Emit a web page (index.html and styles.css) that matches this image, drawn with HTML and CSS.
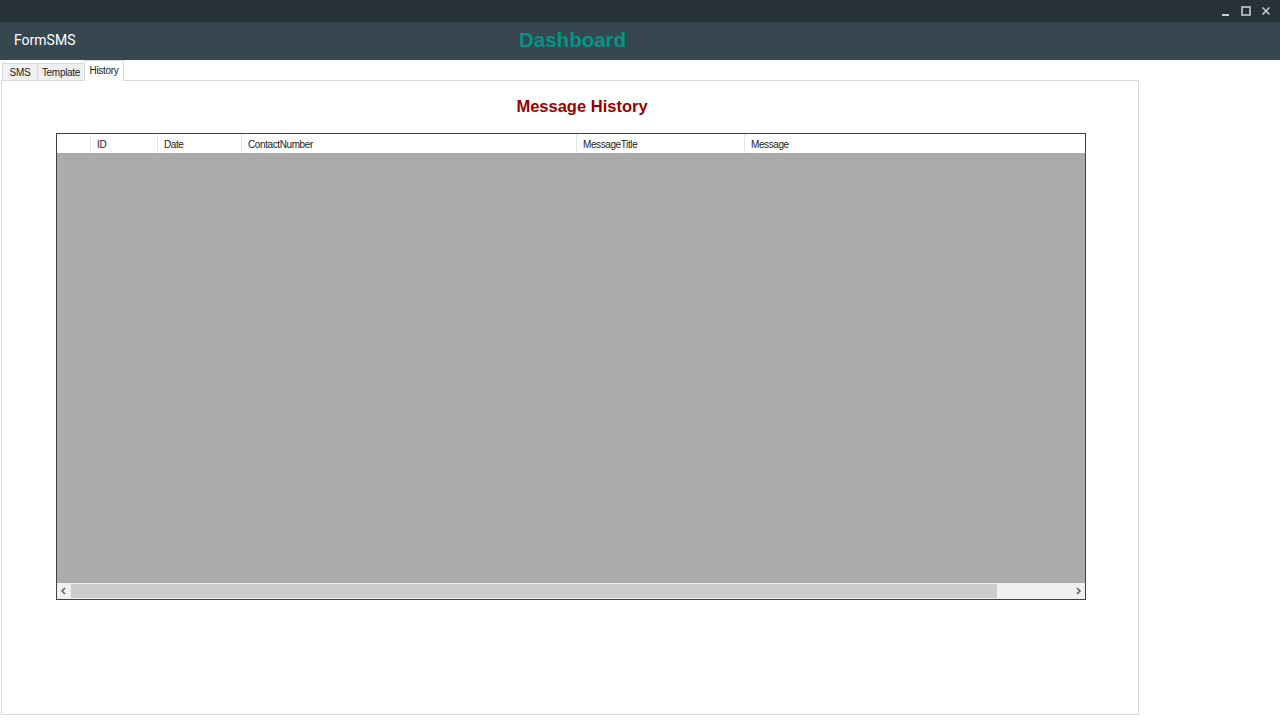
FILE: index.html
```html
<!DOCTYPE html>
<html>
<head>
    <title>FormSMS</title>
    <link rel="stylesheet" href="styles.css">
</head>
<body>
    <div class="titlebar">
        <span class="win-btn">
            <svg width="10" height="10" viewBox="0 0 10 10"><rect x="1" y="8" width="7" height="2" fill="#c8ccce"/></svg>
        </span>
        <span class="win-btn">
            <svg width="10" height="10" viewBox="0 0 10 10"><rect x="1" y="1" width="8" height="8" fill="none" stroke="#c8ccce" stroke-width="1.6"/></svg>
        </span>
        <span class="win-btn">
            <svg width="10" height="10" viewBox="0 0 10 10"><path d="M1.5 1.5 L8.5 8.5 M8.5 1.5 L1.5 8.5" stroke="#c8ccce" stroke-width="1.6"/></svg>
        </span>
    </div>

    <div class="header">
        <div class="app-name">FormSMS</div>
        <div class="page-title">Dashboard</div>
    </div>

    <div class="tabs">
        <div class="tab tab-sms">SMS</div>
        <div class="tab tab-template">Template</div>
        <div class="tab tab-history active">History</div>
    </div>

    <div class="panel">
        <h1>Message History</h1>

        <div class="grid">
            <div class="grid-head">
                <div class="col col-row"></div>
                <div class="col col-id">ID</div>
                <div class="col col-date">Date</div>
                <div class="col col-contact">ContactNumber</div>
                <div class="col col-title">MessageTitle</div>
                <div class="col col-msg">Message</div>
            </div>
            <div class="grid-body"></div>
            <div class="hscroll">
                <div class="arrow">
                    <svg width="8" height="8" viewBox="0 0 8 8"><path d="M5 1 L2 4 L5 7" fill="none" stroke="#606060" stroke-width="1.6"/></svg>
                </div>
                <div class="thumb"></div>
                <div class="track"></div>
                <div class="arrow">
                    <svg width="8" height="8" viewBox="0 0 8 8"><path d="M3 1 L6 4 L3 7" fill="none" stroke="#606060" stroke-width="1.6"/></svg>
                </div>
            </div>
        </div>
    </div>
</body>
</html>
```

FILE: styles.css
```css
body {
    margin: 0;
    background-color: #ffffff;
    font-family: "Liberation Sans", Arial, sans-serif;
    width: 1280px;
    height: 720px;
    overflow: hidden;
}
.titlebar {
    height: 22px;
    background-color: #263238;
    display: flex;
    justify-content: flex-end;
    align-items: center;
    padding-right: 4px;
}
.win-btn {
    width: 20px;
    height: 22px;
    display: flex;
    align-items: center;
    justify-content: center;
}
.header {
    height: 38px;
    background-color: #37474f;
    display: flex;
    align-items: center;
}
.app-name {
    color: #ffffff;
    font-family: Roboto, "Liberation Sans", sans-serif;
    font-size: 14px;
    padding-left: 14px;
    padding-bottom: 2px;
    width: 505px;
}
.page-title {
    color: #009688;
    font-weight: bold;
    font-size: 20.5px;
    padding-bottom: 2px;
}
.tabs {
    display: flex;
    align-items: flex-end;
    height: 20px;
    padding-left: 2px;
    position: relative;
    z-index: 1;
}
.tab {
    height: 16px;
    line-height: 18px;
    font-family: "Liberation Sans", Arial, sans-serif;
    font-size: 10px;
    letter-spacing: -0.3px;
    color: #222;
    text-align: center;
    background-color: #f0f0f0;
    border: 1px solid #d9d9d9;
    border-bottom: none;
    margin-right: -1px;
    box-sizing: content-box;
}
.tab-sms { width: 34px; }
.tab-template { width: 46px; }
.tab-history { width: 38px; }
.tab.active {
    height: 20px;
    line-height: 20px;
    background-color: #ffffff;
    margin-bottom: -1px;
}
.panel {
    margin-left: 1px;
    width: 1136px;
    height: 633px;
    border: 1px solid #d9d9d9;
    background-color: #ffffff;
}
h1 {
    margin: 14px 0 0 0;
    padding-left: 24px;
    text-align: center;
    color: #990000;
    font-size: 16.5px;
    font-weight: bold;
    height: 38px;
    line-height: 22px;
}
.grid {
    margin-left: 54px;
    width: 1028px;
    border: 1px solid #404040;
    display: flex;
    flex-direction: column;
}
.grid-head {
    height: 19px;
    display: flex;
    background-color: #ffffff;
}
.col {
    font-family: "Liberation Sans", Arial, sans-serif;
    font-size: 10px;
    letter-spacing: -0.4px;
    color: #222;
    line-height: 21px;
    padding-left: 6px;
    border-right: 1px solid #e5e5e5;
    box-sizing: border-box;
}
.col-row { width: 34px; }
.col-id { width: 67px; }
.col-date { width: 84px; }
.col-contact { width: 335px; }
.col-title { width: 168px; }
.col-msg { flex: 1; border-right: none; }
.grid-body {
    height: 430px;
    background-color: #ababab;
}
.hscroll {
    height: 16px;
    display: flex;
    background-color: #f0f0f0;
}
.arrow {
    width: 14px;
    display: flex;
    align-items: center;
    justify-content: center;
}
.thumb {
    width: 926px;
    margin: 1px 0;
    background-color: #cdcdcd;
}
.track {
    flex: 1;
}
```
